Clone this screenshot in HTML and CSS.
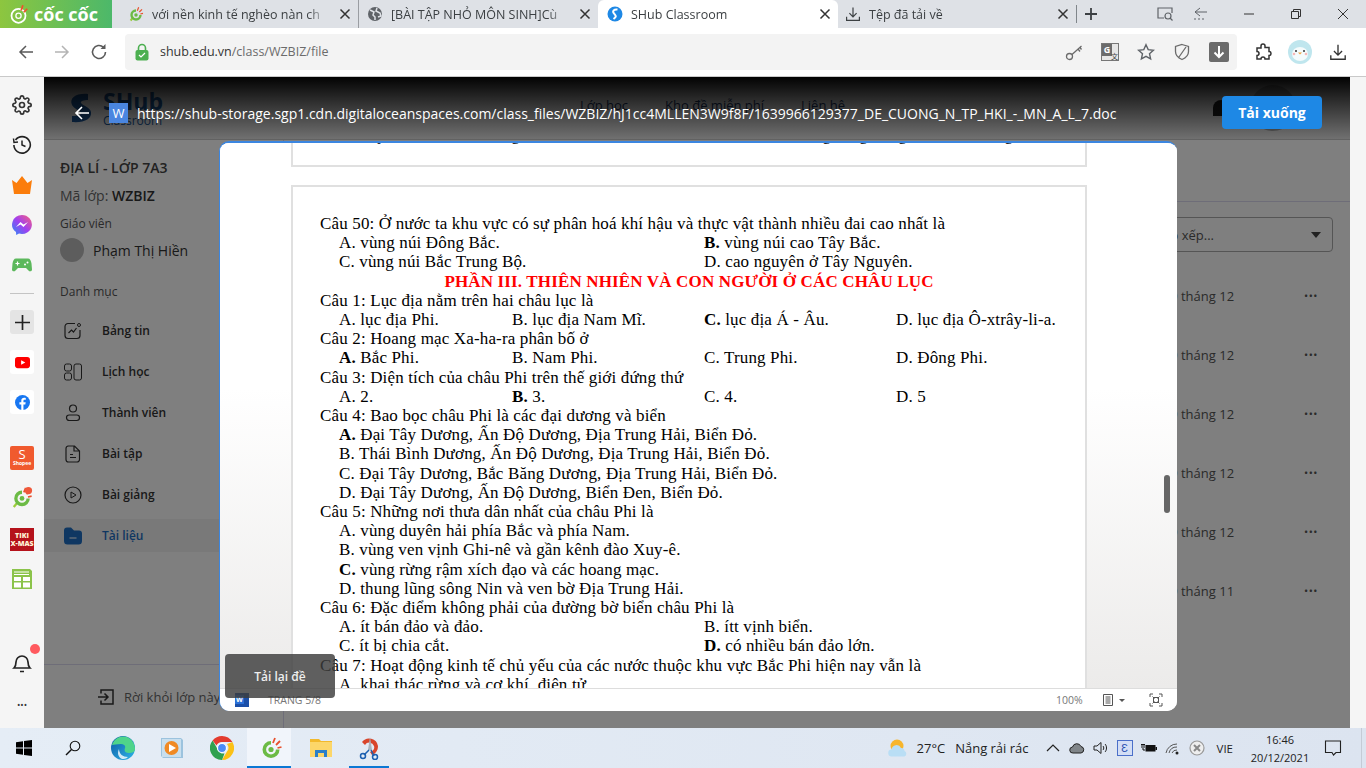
FILE: index.html
```html
<!DOCTYPE html>
<html lang="vi">
<head>
    <meta charset="UTF-8">
    <title>SHub Classroom</title>
    <link rel="stylesheet" href="styles.css">
</head>
<body>
    <svg class="defs" width="0" height="0">
        <symbol id="coccoc" viewBox="0 0 24 24">
            <path d="M12 5a8.5 8.5 0 1 0 8.5 8.5h-3.6A4.9 4.9 0 1 1 12 8.6z" fill="#6cbb45"/>
            <circle cx="12" cy="13.5" r="2.6" fill="#6cbb45"/>
            <path d="M14 7l2-5M17 9l4-4M18.500 12l4-1" stroke="#e8512d" stroke-width="1.800" fill="none"/>
        </symbol>
        <symbol id="gear" viewBox="0 0 24 24">
            <circle cx="12" cy="12" r="3" fill="none" stroke="currentColor" stroke-width="2"/>
            <path fill="none" stroke="currentColor" stroke-width="2" d="M19.400 15a1.650 1.650 0 0 0 .33 1.820l.06.06a2 2 0 0 1 0 2.830 2 2 0 0 1-2.830 0l-.06-.06a1.650 1.650 0 0 0-1.820-.33 1.650 1.650 0 0 0-1 1.510V21a2 2 0 0 1-2 2 2 2 0 0 1-2-2v-.09A1.650 1.650 0 0 0 9 19.400a1.650 1.650 0 0 0-1.820.33l-.06.06a2 2 0 0 1-2.830 0 2 2 0 0 1 0-2.830l.06-.06a1.650 1.650 0 0 0 .33-1.820 1.650 1.650 0 0 0-1.510-1H3a2 2 0 0 1-2-2 2 2 0 0 1 2-2h.09A1.650 1.650 0 0 0 4.600 9a1.650 1.650 0 0 0-.33-1.820l-.06-.06a2 2 0 0 1 0-2.830 2 2 0 0 1 2.830 0l.06.06a1.650 1.650 0 0 0 1.820.33H9a1.650 1.650 0 0 0 1-1.510V3a2 2 0 0 1 2-2 2 2 0 0 1 2 2v.09a1.650 1.650 0 0 0 1 1.510 1.650 1.650 0 0 0 1.820-.33l.06-.06a2 2 0 0 1 2.830 0 2 2 0 0 1 0 2.830l-.06.06a1.650 1.650 0 0 0-.33 1.820V9a1.650 1.650 0 0 0 1.510 1H21a2 2 0 0 1 2 2 2 2 0 0 1-2 2h-.09a1.650 1.650 0 0 0-1.510 1z"/>
        </symbol>
        <symbol id="close" viewBox="0 0 12 12">
            <path d="M1.500 1.500l9 9M10.500 1.500l-9 9" stroke="currentColor" stroke-width="1.500" fill="none"/>
        </symbol>
        <symbol id="download" viewBox="0 0 20 20">
            <path d="M10 2v11M5.500 9l4.500 4.500L14.500 9M2 13.500V18h16v-4.500" stroke="currentColor" stroke-width="1.500" fill="none"/>
        </symbol>
    </svg>

    <div class="tabbar">
        <div class="brand">
            <svg class="brand-mark" viewBox="0 0 24 24"><circle cx="12" cy="14" r="8" fill="none" stroke="#fff" stroke-width="2"/><circle cx="12" cy="14" r="3" fill="none" stroke="#fff" stroke-width="1.500"/><path d="M15 8l2-6M18 10l4-4" stroke="#f0502d" stroke-width="2"/></svg>
            <span class="brand-name">cốc cốc</span>
        </div>
        <div class="tab tab-one">
            <svg class="tab-icon" viewBox="0 0 24 24"><path d="M4 22l4-6" stroke="#9ccc3c" stroke-width="3"/><use href="#coccoc"/></svg>
            <span class="tab-title">với nền kinh tế nghèo nàn ch</span>
            <svg class="tab-close"><use href="#close"/></svg>
        </div>
        <div class="tab tab-two">
            <svg class="tab-icon" viewBox="0 0 16 16"><circle cx="8" cy="8" r="7" fill="#5f6368"/><path d="M3 4l4 2-1 3 2 2v3M10 2l-1 3 4 2 1 3-3 1" stroke="#dee1e6" stroke-width="1.500" fill="none"/></svg>
            <span class="tab-title">[BÀI TẬP NHỎ MÔN SINH]Cù</span>
            <svg class="tab-close"><use href="#close"/></svg>
        </div>
        <div class="tab tab-active">
            <svg class="tab-icon" viewBox="0 0 16 16"><circle cx="8" cy="8" r="7.500" fill="#1e88e5"/><path d="M10.500 3.500C7 3 5 5 7 7.500s3 3-.5 5.500" stroke="#fff" stroke-width="2" fill="none"/></svg>
            <span class="tab-title">SHub Classroom</span>
            <svg class="tab-close"><use href="#close"/></svg>
        </div>
        <div class="tab tab-four">
            <svg class="tab-icon"><use href="#download"/></svg>
            <span class="tab-title">Tệp đã tải về</span>
            <svg class="tab-close"><use href="#close"/></svg>
        </div>
        <div class="tab-new">
            <svg viewBox="0 0 12 12"><path d="M6 0v12M0 6h12" stroke="#3c4043" stroke-width="1.800"/></svg>
        </div>
        <div class="window-tools">
            <svg class="win-capture" viewBox="0 0 18 16"><path d="M8 12H2V2h14v5" stroke="#5f6368" stroke-width="1.200" fill="none"/><circle cx="12" cy="10" r="3" stroke="#5f6368" stroke-width="1.200" fill="none"/><path d="M14 12l2.500 2.500" stroke="#5f6368" stroke-width="1.200"/></svg>
            <svg class="win-back" viewBox="0 0 16 16"><path d="M8 2L3 6l5 4M3 6h12M2 13h2M6 13h2M10 13h2" stroke="#5f6368" stroke-width="1" fill="none"/></svg>
            <svg class="win-btn" viewBox="0 0 12 12"><path d="M1 6h10" stroke="#333" stroke-width="1"/></svg>
            <svg class="win-btn" viewBox="0 0 12 12"><path d="M1.500 3.500h7v7h-7zM3.500 3.500v-2h7v7h-2" stroke="#333" stroke-width="1" fill="none"/></svg>
            <svg class="win-btn win-close" viewBox="0 0 12 12"><path d="M1 1l10 10M11 1L1 11" stroke="#333" stroke-width="1" fill="none"/></svg>
        </div>
    </div>

    <div class="toolbar">
        <svg class="nav-btn" viewBox="0 0 16 16"><path d="M15 8H2M8 2L2 8l6 6" stroke="#5a5a5a" stroke-width="1.500" fill="none"/></svg>
        <svg class="nav-btn" viewBox="0 0 16 16"><path d="M1 8h13M8 2l6 6-6 6" stroke="#b4b4b4" stroke-width="1.500" fill="none"/></svg>
        <svg class="nav-btn" viewBox="0 0 18 18"><path d="M15.500 9A6.500 6.500 0 1 1 13.500 4.300" stroke="#5a5a5a" stroke-width="1.600" fill="none"/><path d="M15.500 1v5h-5z" fill="#5a5a5a"/></svg>
        <div class="omnibox">
            <svg class="lock" viewBox="0 0 14 18"><path d="M3.500 8V5a3.500 3.500 0 0 1 7 0v3" stroke="#4caf50" stroke-width="1.600" fill="none"/><rect x="0.500" y="7" width="13" height="10.500" rx="2" fill="#4caf50"/><path d="M4 12l2 2 4-4" stroke="#fff" stroke-width="1.200" fill="none"/></svg>
            <span class="url"><span class="url-host">shub.edu.vn</span>/class/WZBIZ/file</span>
            <div class="omni-tools">
                <svg class="omni-icon" viewBox="0 0 18 18"><circle cx="4.500" cy="13.500" r="3" stroke="#6b6b6b" stroke-width="1.300" fill="none"/><path d="M7 11.500L16.500 3M13 6l2 2.500M15 4.500l1.500 2" stroke="#6b6b6b" stroke-width="1.300" fill="none"/></svg>
                <div class="translate"><span class="translate-g">G</span><span class="translate-x">文</span></div>
                <svg class="omni-icon" viewBox="0 0 18 18"><path d="M9 1.800l2.200 4.800 5.200.6-3.900 3.500 1.100 5.200L9 13.300l-4.600 2.600 1.100-5.200L1.600 7.200l5.200-.6z" stroke="#5f6368" stroke-width="1.400" fill="none"/></svg>
                <svg class="omni-icon" viewBox="0 0 18 18"><path d="M9 1.500l6.500 2v5c0 4-3 6.500-6.500 8-3.500-1.500-6.500-4-6.500-8v-5zM13 4L6 14" stroke="#6b6b6b" stroke-width="1.300" fill="none"/></svg>
                <div class="omni-download"><svg viewBox="0 0 14 14"><path d="M7 1v11M2.500 7.500L7 12l4.500-4.500" stroke="#fff" stroke-width="2" fill="none"/></svg></div>
            </div>
        </div>
        <div class="browser-tools">
            <svg class="puzzle" viewBox="0 0 18 18"><path d="M7 3a2 2 0 0 1 4 0v1.500h4V8.500a2 2 0 0 1 0 4V16h-4a2 2 0 0 0-4 0H3v-3.500a2 2 0 0 0 0-4V5h4z" stroke="#333" stroke-width="1.500" fill="none"/></svg>
            <svg class="profile" viewBox="0 0 24 24"><circle cx="12" cy="12" r="12" fill="#bfe6ee"/><ellipse cx="12" cy="14" rx="8" ry="7" fill="#f4fbfc"/><circle cx="8" cy="11" r="1" fill="#333"/><circle cx="16" cy="11" r="1" fill="#333"/><path d="M10 12.500h4l-2 2z" fill="#f0a23c"/><circle cx="6" cy="14" r="1.300" fill="#f7b7b7"/><circle cx="18" cy="14" r="1.300" fill="#f7b7b7"/></svg>
            <svg class="browser-download"><use href="#download"/></svg>
        </div>
    </div>

    <div class="main">
        <div class="appbar">
            <svg class="app-icon gear-icon"><use href="#gear"/></svg>
            <svg class="app-icon" viewBox="0 0 20 20"><path d="M3.500 5a8.200 8.200 0 1 1-1.600 5" stroke="#222" stroke-width="1.600" fill="none"/><path d="M1.500 3.500l.5 4 4-.5M10 5.500V10l3.500 1.500" stroke="#222" stroke-width="1.500" fill="none"/></svg>
            <svg class="app-icon" viewBox="0 0 20 20"><path d="M0 5l4.500 3L10 1l5.500 7L20 5l-2 14H2z" fill="#fb7d0b"/></svg>
            <svg class="app-icon" viewBox="0 0 20 20"><defs><linearGradient id="mess" x1="0" y1="1" x2="1" y2="0"><stop offset="0" stop-color="#2a8df5"/><stop offset=".5" stop-color="#a13ff0"/><stop offset="1" stop-color="#f9627b"/></linearGradient></defs><path d="M10 0a10 9.500 0 0 0-6 17l.2 3 2.800-1.400A10 9.500 0 1 0 10 0z" fill="url(#mess)"/><path d="M4 12l4.500-5 3 2.500L16 7l-4.500 5-3-2.500z" fill="#fff"/></svg>
            <svg class="app-icon" viewBox="0 0 20 20"><path d="M4 3.500h12c2 0 3 2 3.500 5l.5 6c0 2-2.500 2.500-3.500 1L14 13H6l-2.500 2.500c-1 1.500-3.500 1-3.500-1l.5-6c.5-3 1.500-5 3.500-5z" fill="#5cb85c"/><path d="M3.500 8.500h4M5.500 6.500v4" stroke="#fff" stroke-width="1.200"/><circle cx="13" cy="9.500" r="1" fill="#fff"/><circle cx="15.500" cy="7.500" r="1" fill="#fff"/></svg>
            <div class="app-divider"></div>
            <div class="app-box app-plus"><svg viewBox="0 0 16 16"><path d="M8 0v16M0 8h16" stroke="#222" stroke-width="1.800"/></svg></div>
            <div class="app-box"><svg viewBox="0 0 16 12" class="box-wide"><rect width="16" height="12" rx="3" fill="#f00"/><path d="M6.500 3.500v5L11 6z" fill="#fff"/></svg></div>
            <div class="app-box"><svg viewBox="0 0 16 16"><circle cx="8" cy="8" r="8" fill="#1877f2"/><path d="M9 16v-6h2l.4-2.300H9V6.300c0-.7.3-1.200 1.300-1.200h1.200V3.100C11 3 10.300 3 9.700 3 8 3 6.700 4 6.700 6v1.700H4.700V10h2v6z" fill="#fff"/></svg></div>
            <div class="app-shopee"><span class="shopee-s">S</span><span class="shopee-name">Shopee</span></div>
            <svg class="app-icon app-coccoc" viewBox="0 0 24 24"><path d="M3 23l5-6" stroke="#9ccc3c" stroke-width="2.500"/><use href="#coccoc"/><circle cx="19" cy="5" r="4" fill="#f0583a"/></svg>
            <div class="app-tiki"><span>TIKI</span><span>X-MAS</span></div>
            <svg class="app-icon" viewBox="0 0 20 20"><path d="M0 0h18l2 2v18H0z" fill="#8bc34a"/><path d="M2 3h15M2 5.500h15" stroke="#fff" stroke-width="1.200"/><rect x="2" y="8" width="7" height="4" fill="#fff"/><rect x="11" y="8" width="7" height="4" fill="#fff"/><rect x="2" y="13.500" width="7" height="5" fill="#fff"/><rect x="11" y="13.500" width="7" height="5" fill="#fff"/></svg>
            <div class="app-bell">
                <svg viewBox="0 0 20 22"><path d="M2 16c1.500-1.500 2-3 2-6a6 6 0 0 1 12 0c0 3 .5 4.500 2 6zM8 19.500h4" stroke="#222" stroke-width="1.700" fill="none"/></svg>
                <span class="bell-dot"></span>
            </div>
            <div class="app-more">•••</div>
        </div>

        <div class="page">
            <div class="page-header">
                <div class="shub-logo">
                    <svg class="shub-mark" viewBox="0 0 26 30"><path d="M20 1C8 0 1 5 4 12c2 4 8 5 9 8 0 2-3 3-9 3v6c12 1 20-3 19-10-1-5-8-6-10-9-1-2 3-3 7-3z" fill="#1d5fa8"/></svg>
                    <div class="shub-text">
                        <span class="shub-word">SHub</span>
                        <span class="shub-sub">Classroom</span>
                    </div>
                </div>
                <nav class="header-nav">
                    <span>Lớp học</span>
                    <span>Kho đề miễn phí</span>
                    <span>Liên hệ</span>
                </nav>
                <div class="header-user"><span class="header-bell"></span><span class="header-avatar"></span></div>
            </div>
            <div class="page-body">
                <aside class="sidebar">
                    <h3 class="class-title">ĐỊA LÍ - LỚP 7A3</h3>
                    <p class="class-code">Mã lớp: <b>WZBIZ</b></p>
                    <p class="side-label">Giáo viên</p>
                    <div class="teacher"><span class="avatar"></span>Phạm Thị Hiền</div>
                    <p class="side-label side-label-cat">Danh mục</p>
                    <ul class="side-menu">
                        <li class="side-item">
                            <svg viewBox="0 0 18 18"><path d="M11 1.500H4A3 3 0 0 0 1 4.500v9a3 3 0 0 0 3 3h9a3 3 0 0 0 3-3V8M4.500 11l3-3 2 2 3-4" stroke="#333" stroke-width="1.200" fill="none"/><circle cx="15" cy="3" r="1.500" stroke="#333" fill="none"/></svg>
                            Bảng tin
                        </li>
                        <li class="side-item">
                            <svg viewBox="0 0 18 18"><rect x="0.500" y="1" width="7" height="7" rx="2" stroke="#333" fill="none"/><rect x="0.500" y="10" width="7" height="7" rx="2" stroke="#333" fill="none"/><rect x="10" y="1" width="7.500" height="16" rx="2" stroke="#333" fill="none"/></svg>
                            Lịch học
                        </li>
                        <li class="side-item">
                            <svg viewBox="0 0 18 18"><circle cx="9" cy="4.500" r="3.500" stroke="#333" stroke-width="1.200" fill="none"/><rect x="2.500" y="11" width="13" height="5.500" rx="2.700" stroke="#333" stroke-width="1.200" fill="none"/></svg>
                            Thành viên
                        </li>
                        <li class="side-item">
                            <svg viewBox="0 0 18 18"><path d="M3.500 1h7l5 5v8.500a2.500 2.500 0 0 1-2.500 2.500H4.500A2.500 2.500 0 0 1 2 14.500v-11A2.500 2.500 0 0 1 4.500 1zM10 1v5h5.500M6 9.500h3M6 12.500h6" stroke="#333" stroke-width="1.200" fill="none"/></svg>
                            Bài tập
                        </li>
                        <li class="side-item">
                            <svg viewBox="0 0 18 18"><circle cx="9" cy="9" r="8" stroke="#333" stroke-width="1.200" fill="none"/><path d="M7 6v6l5-3z" stroke="#333" fill="none"/></svg>
                            Bài giảng
                        </li>
                        <li class="side-item side-item-active">
                            <svg viewBox="0 0 18 18"><path d="M3 .5h4l3 3h5a3 3 0 0 1 3 3V14a3.500 3.500 0 0 1-3.500 3.500h-11A3.500 3.500 0 0 1 0 14V3.500A3 3 0 0 1 3 .5z" fill="#1e6fc4"/><path d="M5.500 11h7" stroke="#dfe9f5" stroke-width="1.200"/></svg>
                            Tài liệu
                        </li>
                    </ul>
                    <div class="side-foot">
                        <svg viewBox="0 0 16 16"><path d="M3 4.500V1h12v14H3v-3.500M0 8h10M6.500 4.500L10 8l-3.500 3.500" stroke="#333" stroke-width="1.500" fill="none"/></svg>
                        Rời khỏi lớp này
                    </div>
                </aside>
                <section class="files">
                    <div class="files-tabs"></div>
                    <div class="sort-box"><span>Sắp xếp...</span><i class="sort-caret"></i></div>
                    <div class="file-row"><span>19 tháng 12</span><i>•••</i></div>
                    <div class="file-row"><span>19 tháng 12</span><i>•••</i></div>
                    <div class="file-row"><span>19 tháng 12</span><i>•••</i></div>
                    <div class="file-row"><span>19 tháng 12</span><i>•••</i></div>
                    <div class="file-row"><span>19 tháng 12</span><i>•••</i></div>
                    <div class="file-row"><span>29 tháng 11</span><i>•••</i></div>
                </section>
            </div>

            <div class="scrim"></div>
            <div class="viewer-top">
                <svg class="viewer-back" viewBox="0 0 16 16"><path d="M15 8H2M8 2L2 8l6 6" stroke="#fff" stroke-width="1.600" fill="none"/></svg>
                <span class="word-badge">W</span>
                <span class="viewer-url">https://shub-storage.sgp1.cdn.digitaloceanspaces.com/class_files/WZBIZ/hJ1cc4MLLEN3W9f8F/1639966129377_DE_CUONG_N_TP_HKI_-_MN_A_L_7.doc</span>
                <button class="viewer-download">Tải xuống</button>
            </div>

            <div class="viewer">
                <div class="doc-scroll">
                    <div class="doc-page doc-page-cut">
                        <p class="line line-opt">B. Tây Bắc có nhiều vùng trọn thiên nhiên thành các đai cao theo cùng rừng vùng núi lớn ở đồng</p>
                    </div>
                    <div class="doc-page">
                        <p class="line">Câu 50: Ở nước ta khu vực có sự phân hoá khí hậu và thực vật thành nhiều đai cao nhất là</p>
                        <div class="opts opts-2"><span>A. vùng núi Đông Bắc.</span><span><b>B.</b> vùng núi cao Tây Bắc.</span></div>
                        <div class="opts opts-2"><span>C. vùng núi Bắc Trung Bộ.</span><span>D. cao nguyên ở Tây Nguyên.</span></div>
                        <p class="line doc-heading">PHẦN III. THIÊN NHIÊN VÀ CON NGƯỜI Ở CÁC CHÂU LỤC</p>
                        <p class="line">Câu 1: Lục địa nằm trên hai châu lục là</p>
                        <div class="opts opts-4"><span>A. lục địa Phi.</span><span>B. lục địa Nam Mĩ.</span><span><b>C.</b> lục địa Á - Âu.</span><span>D. lục địa Ô-xtrây-li-a.</span></div>
                        <p class="line">Câu 2: Hoang mạc Xa-ha-ra phân bố ở</p>
                        <div class="opts opts-4"><span><b>A.</b> Bắc Phi.</span><span>B. Nam Phi.</span><span>C. Trung Phi.</span><span>D. Đông Phi.</span></div>
                        <p class="line">Câu 3: Diện tích của châu Phi trên thế giới đứng thứ</p>
                        <div class="opts opts-4"><span>A. 2.</span><span><b>B.</b> 3.</span><span>C. 4.</span><span>D. 5</span></div>
                        <p class="line">Câu 4: Bao bọc châu Phi là các đại dương và biển</p>
                        <p class="line line-opt"><b>A.</b> Đại Tây Dương, Ấn Độ Dương, Địa Trung Hải, Biển Đỏ.</p>
                        <p class="line line-opt">B. Thái Bình Dương, Ấn Độ Dương, Địa Trung Hải, Biển Đỏ.</p>
                        <p class="line line-opt">C. Đại Tây Dương, Bắc Băng Dương, Địa Trung Hải, Biển Đỏ.</p>
                        <p class="line line-opt">D. Đại Tây Dương, Ấn Độ Dương, Biển Đen, Biển Đỏ.</p>
                        <p class="line">Câu 5: Những nơi thưa dân nhất của châu Phi là</p>
                        <p class="line line-opt">A. vùng duyên hải phía Bắc và phía Nam.</p>
                        <p class="line line-opt">B. vùng ven vịnh Ghi-nê và gần kênh đào Xuy-ê.</p>
                        <p class="line line-opt"><b>C.</b> vùng rừng rậm xích đạo và các hoang mạc.</p>
                        <p class="line line-opt">D. thung lũng sông Nin và ven bờ Địa Trung Hải.</p>
                        <p class="line">Câu 6: Đặc điểm không phải của đường bờ biển châu Phi là</p>
                        <div class="opts opts-2"><span>A. ít bán đảo và đảo.</span><span>B. ítt vịnh biển.</span></div>
                        <div class="opts opts-2"><span>C. ít bị chia cắt.</span><span><b>D.</b> có nhiều bán đảo lớn.</span></div>
                        <p class="line">Câu 7: Hoạt động kinh tế chủ yếu của các nước thuộc khu vực Bắc Phi hiện nay vẫn là</p>
                        <p class="line line-opt">A. khai thác rừng và cơ khí, điện tử.</p>
                    </div>
                    <div class="doc-thumb"></div>
                </div>
                <div class="viewer-status">
                    <span class="status-word"><i>W</i></span>
                    <span class="status-page">TRANG 5/8</span>
                    <span class="status-zoom">100%</span>
                    <svg class="status-view" viewBox="0 0 12 12"><path d="M1.500 .5h9v11h-9zM3.500 3h5M3.500 5h5M3.500 7h5M3.500 9h5" stroke="#555" fill="none"/></svg>
                    <i class="status-caret"></i>
                    <svg class="status-full" viewBox="0 0 14 14"><path d="M1 4V1h3M10 1h3v3M13 10v3h-3M4 13H1v-3M3.500 3.500l2 2M10.500 3.500l-2 2M3.500 10.500l2-2M10.500 10.500l-2-2" stroke="#555" fill="none"/><rect x="4.500" y="4.500" width="5" height="5" stroke="#555" fill="none"/></svg>
                </div>
            </div>
            <div class="reload-toast">Tải lại đề</div>
        </div>

        <div class="rightstrip"></div>
    </div>

    <div class="taskbar">
        <div class="task-slot task-slot-win"><svg class="task-win" viewBox="0 0 16 16"><path d="M0 2.200L7 1.200v6.300H0zM8 1l8-1v7.500H8zM0 8.500h7v6.300l-7-1zM8 8.500h8V16l-8-1.100z" fill="#000"/></svg></div>
        <div class="task-slot task-slot-search"><svg viewBox="0 0 16 16" class="task-search"><circle cx="10" cy="6" r="4.800" stroke="#111" stroke-width="1.100" fill="none"/><path d="M6.500 9.500L1 15" stroke="#111" stroke-width="1.400"/></svg></div>
        <div class="task-slot"><svg viewBox="0 0 24 24"><defs><linearGradient id="edge" x1="0" y1="0" x2="1" y2="1"><stop offset="0" stop-color="#0c59a4"/><stop offset="1" stop-color="#2fb6e8"/></linearGradient></defs><circle cx="12" cy="12" r="12" fill="url(#edge)"/><path d="M1 9C3 2 10-1 16 1c5 2 8 7 8 12 0 3-3 4-6 4-4 0-5-2-4-5 1-2-1-4-4-4-4 0-7 1-9 1z" fill="#4fd48a"/><path d="M11 23c-4-2-5-6-3-10 0 5 4 8 9 8-2 2-4 2-6 2z" fill="#fff" opacity=".8"/></svg></div>
        <div class="task-slot"><svg viewBox="0 0 24 24"><path d="M1 2h20l2 2v18H3l-2-2z" fill="#9cc3de"/><rect x="2" y="3" width="19" height="18" fill="#c9dfee"/><circle cx="11.500" cy="12" r="7" fill="#f08a24"/><path d="M9 8v8l7-4z" fill="#fff"/></svg></div>
        <div class="task-slot"><svg viewBox="0 0 24 24"><path d="M12 0a12 12 0 0 1 10.400 6H12a6 6 0 0 0-5.500 3.500L2.600 4.500A12 12 0 0 1 12 0z" fill="#e33b2e"/><path d="M22.400 6A12 12 0 0 1 12 24l5-8.500A6 6 0 0 0 17 8z" fill="#fbc116"/><path d="M12 24A12 12 0 0 1 2.600 4.500L7.500 13a6 6 0 0 0 7 4.500z" fill="#2fa14e"/><circle cx="12" cy="12" r="4.500" fill="#4c8bf5" stroke="#fff" stroke-width="1.200"/></svg></div>
        <div class="task-slot task-slot-active"><svg viewBox="0 0 24 24"><use href="#coccoc"/></svg></div>
        <div class="task-slot"><svg viewBox="0 0 24 24"><path d="M1 3h9l2 2h11v16H1z" fill="#f2b92c"/><rect x="1" y="6" width="22" height="15" fill="#fcd669"/><path d="M6 21v-7h12v7h-3v-4H9v4z" fill="#2a7fc9"/></svg></div>
        <div class="task-slot task-slot-open"><svg viewBox="0 0 24 24"><path d="M4 6a9 9 0 0 1 16 4c0 5-3 8-6 9l-2-3c3-1 5-3 4-6a5 5 0 0 0-9-1z" fill="#d9452b"/><path d="M12 1l2 13h-4z" fill="#aab4bd"/><path d="M11 14l-5 5M13 14l3 6" stroke="#1b5fb0" stroke-width="1.500"/><circle cx="5" cy="20" r="2.500" fill="none" stroke="#1b5fb0" stroke-width="1.500"/><circle cx="17" cy="21" r="2.500" fill="none" stroke="#1b5fb0" stroke-width="1.500"/></svg></div>

        <div class="tray">
            <svg class="tray-weather" viewBox="0 0 20 20"><circle cx="10" cy="8" r="6.500" fill="#f7b52c"/><path d="M5 18.500a3.500 3.500 0 0 1-.5-7A5 5 0 0 1 14 10a3 3 0 0 1 3.500 3 3 3 0 0 1 0 5.500z" fill="#b9def5"/></svg>
            <span class="tray-temp">27°C</span>
            <span class="tray-desc">Nắng rải rác</span>
            <svg class="tray-icon" viewBox="0 0 16 16"><path d="M2 11l6-6 6 6" stroke="#222" stroke-width="1.200" fill="none"/></svg>
            <svg class="tray-icon" viewBox="0 0 16 16"><path d="M4 13a3 3 0 0 1-.5-6A4.500 4.500 0 0 1 12 6.500a3.300 3.300 0 0 1 0 6.500z" fill="#808589" stroke="#222"/></svg>
            <svg class="tray-icon" viewBox="0 0 16 16"><path d="M1 6h3l4-3.500v11L4 10H1zM10 6c1 1 1 3 0 4M12 4c2 2 2 6 0 8" stroke="#222" fill="none"/></svg>
            <div class="tray-eng">Ɛ</div>
            <svg class="tray-icon" viewBox="0 0 16 16"><path d="M1 4v4M3 4v4M0 4.500h4M2 8v2h2" stroke="#111" fill="none"/><rect x="4.500" y="5" width="10" height="6.500" fill="#111"/><rect x="14.500" y="7" width="1.500" height="3" fill="#111"/></svg>
            <svg class="tray-icon" viewBox="0 0 16 16"><path d="M1 13a11 11 0 0 1 11-9M4 13a8 8 0 0 1 8-6M7 13a5 5 0 0 1 5-3" stroke="#555" stroke-width="1" fill="none"/><circle cx="12" cy="13" r="1.500" fill="#222"/></svg>
            <svg class="tray-icon" viewBox="0 0 16 16"><circle cx="8" cy="8" r="7" stroke="#999" stroke-width="1.200" fill="#eee"/><path d="M5 5l6 6M11 5l-6 6" stroke="#888" stroke-width="2"/></svg>
            <span class="tray-lang">VIE</span>
            <div class="tray-clock"><span>16:46</span><span>20/12/2021</span></div>
            <svg class="tray-notify" viewBox="0 0 18 18"><path d="M1.500 2h15v11.500H12L9.500 16 8 13.500H1.500z" stroke="#222" stroke-width="1.100" fill="none"/></svg>
        </div>
    </div>
</body>
</html>
```

FILE: styles.css
```css
* {
    box-sizing: border-box;
}

html, body {
    margin: 0;
    height: 768px;
    overflow: hidden;
}

body {
    display: flex;
    flex-direction: column;
    font-family: "Open Sans", sans-serif;
    color: #222;
}

p, h3, ul {
    margin: 0;
    padding: 0;
}

.defs {
    position: absolute;
}

/* tab strip */
.tabbar {
    height: 28px;
    display: flex;
    background-color: #dee1e6;
    flex-shrink: 0;
}

.brand {
    width: 112px;
    display: flex;
    align-items: center;
    padding-left: 8px;
    background: linear-gradient(90deg, #8dc63f, #4cb86a);
    color: white;
}

.brand-mark {
    width: 21px;
    height: 24px;
}

.brand-name {
    font-size: 18px;
    font-weight: 700;
    margin-left: 5px;
    line-height: 1;
    white-space: nowrap;
}

.tab {
    display: flex;
    align-items: center;
    font-size: 12.500px;
    color: #3c4043;
    padding-left: 16px;
}

.tab-one {
    width: 247px;
    border-right: 1px solid #9a9da2;
}

.tab-two {
    width: 239px;
    padding-left: 8px;
}

.tab-active {
    width: 240px;
    background-color: white;
    border-radius: 6px 6px 0 0;
    padding-left: 9px;
}

.tab-four {
    width: 238px;
    padding-left: 7px;
}

.tab-icon {
    width: 16px;
    height: 16px;
    flex-shrink: 0;
}

.tab-title {
    flex: 1;
    margin-left: 8px;
    white-space: nowrap;
    overflow: hidden;
    -webkit-mask-image: linear-gradient(90deg, #000 88%, transparent);
}

.tab-close {
    width: 12px;
    height: 12px;
    margin: 0 7px 0 10px;
    flex-shrink: 0;
    color: #333;
}

.tab-new {
    width: 30px;
    display: flex;
    align-items: center;
    padding-left: 8px;
    height: 18px;
    margin-top: 5px;
    border-left: 1px solid #80868b;
}

.tab-new svg {
    width: 12px;
    height: 12px;
}

.window-tools {
    margin-left: auto;
    display: flex;
    align-items: center;
    padding-right: 17px;
}

.win-capture {
    width: 18px;
    height: 16px;
}

.win-back {
    width: 16px;
    height: 16px;
    margin-left: 18px;
}

.win-btn {
    width: 12px;
    height: 12px;
    margin-left: 35px;
}

/* address bar */
.toolbar {
    height: 49px;
    display: flex;
    align-items: center;
    background-color: white;
    border-bottom: 1px solid #c9c9c9;
    padding-left: 18px;
    padding-bottom: 1px;
    flex-shrink: 0;
}

.nav-btn {
    width: 16px;
    height: 16px;
    margin-right: 20px;
}

.nav-btn:nth-child(3) {
    width: 18px;
    height: 18px;
    margin-right: 17px;
}

.omnibox {
    width: 1112px;
    height: 36px;
    background-color: #f3f3f3;
    border-radius: 4px;
    display: flex;
    align-items: center;
    padding-left: 10px;
}

.lock {
    width: 14px;
    height: 18px;
}

.url {
    margin-left: 11px;
    font-size: 12.500px;
    color: #6b6b6b;
}

.url-host {
    color: #333;
}

.omni-tools {
    margin-left: auto;
    display: flex;
    align-items: center;
    gap: 18px;
    padding-right: 8px;
}

.omni-icon {
    width: 18px;
    height: 18px;
}

.translate {
    width: 18px;
    height: 18px;
    position: relative;
    background-color: #e6e6e6;
    border: 1px solid #777;
}

.translate-g {
    position: absolute;
    left: 0;
    top: 0;
    width: 10px;
    height: 12px;
    background-color: #6b6b6b;
    color: white;
    font-size: 9px;
    font-weight: 700;
    line-height: 12px;
    text-align: center;
}

.translate-x {
    position: absolute;
    right: 0;
    bottom: 0;
    font-family: "Noto Sans CJK SC", sans-serif;
    font-size: 7px;
    line-height: 8px;
    color: #444;
}

.omni-download {
    width: 20px;
    height: 20px;
    background-color: #6b6b6b;
    border-radius: 2px;
    display: flex;
    align-items: center;
    justify-content: center;
}

.omni-download svg {
    width: 14px;
    height: 14px;
}

.browser-tools {
    flex: 1;
    display: flex;
    align-items: center;
}

.puzzle {
    width: 18px;
    height: 18px;
    margin-left: 17px;
}

.profile {
    width: 24px;
    height: 24px;
    margin-left: 16px;
}

.browser-download {
    width: 18px;
    height: 18px;
    margin-left: 17px;
    color: #333;
}

/* main area */
.main {
    flex: 1;
    display: flex;
    min-height: 0;
}

.appbar {
    width: 44px;
    background-color: #f5f5f5;
    display: flex;
    flex-direction: column;
    align-items: center;
    padding-top: 18px;
    flex-shrink: 0;
}

.app-icon {
    width: 20px;
    height: 20px;
    margin-bottom: 20px;
    flex-shrink: 0;
}

.gear-icon {
    color: #333;
}

.app-divider {
    width: 24px;
    height: 1px;
    background-color: #c4c4c4;
    margin: -2px 0 16px;
}

.app-box {
    width: 24px;
    height: 24px;
    background-color: white;
    border-radius: 3px;
    display: flex;
    align-items: center;
    justify-content: center;
    margin-bottom: 16px;
}

.app-box svg {
    width: 15px;
    height: 15px;
}

.app-plus {
    background-color: #e4e4e4;
}

.app-shopee {
    width: 24px;
    height: 24px;
    background-color: #f05a2e;
    border-radius: 2px;
    color: white;
    display: flex;
    flex-direction: column;
    align-items: center;
    margin: 16px 0;
    line-height: 1;
}

.shopee-s {
    font-size: 13px;
    margin-top: 2px;
}

.shopee-name {
    font-size: 5px;
    font-weight: 700;
}

.app-coccoc {
    width: 22px;
    height: 22px;
}

.app-tiki {
    width: 24px;
    height: 23px;
    background-color: #b5121b;
    color: #fff3d6;
    font-size: 7px;
    font-weight: 800;
    line-height: 8px;
    display: flex;
    flex-direction: column;
    align-items: center;
    justify-content: center;
    margin-bottom: 18px;
}

.app-bell {
    margin-top: auto;
    position: relative;
    width: 20px;
    height: 22px;
}

.app-bell svg {
    width: 20px;
    height: 22px;
}

.bell-dot {
    position: absolute;
    top: -8px;
    right: -8px;
    width: 10px;
    height: 10px;
    background-color: #ff5a5f;
    border-radius: 50%;
}

.app-more {
    font-size: 9px;
    color: #333;
    margin: 26px 0 18px;
    line-height: 10px;
}

.page {
    flex: 1;
    position: relative;
    background-color: white;
    display: flex;
    flex-direction: column;
    min-width: 0;
}

.page-header {
    height: 63px;
    flex-shrink: 0;
    display: flex;
    align-items: center;
    padding-left: 24px;
    padding-right: 54px;
    border-bottom: 1px solid #ddd;
}

.shub-logo {
    display: flex;
    align-items: center;
    width: 97px;
    flex-shrink: 0;
}

.shub-mark {
    width: 26px;
    height: 30px;
    margin-right: 9px;
    flex-shrink: 0;
}

.shub-text {
    display: flex;
    flex-direction: column;
    line-height: 1;
}

.shub-word {
    font-size: 23px;
    font-weight: 700;
    color: #1d5fa8;
}

.shub-sub {
    font-size: 12px;
    color: #1d5fa8;
    margin-top: 2px;
}

.header-nav {
    display: flex;
    gap: 37px;
    margin-left: 415px;
    font-size: 13px;
    color: #1d3a6b;
    padding-bottom: 6px;
}

.header-user {
    margin-left: auto;
    display: flex;
    align-items: center;
}

.header-bell {
    width: 16px;
    height: 16px;
    background-color: #222;
    border-radius: 50% 50% 0 0;
    margin-right: 21px;
}

.header-avatar {
    width: 46px;
    height: 46px;
    background-color: #bbb;
    border-radius: 50%;
}

.page-body {
    flex: 1;
    display: flex;
    min-height: 0;
}

.sidebar {
    width: 240px;
    flex-shrink: 0;
    border-right: 1px solid #dddbf0;
    display: flex;
    flex-direction: column;
    color: #444;
}

.class-title {
    font-size: 14px;
    font-weight: 600;
    margin: 18px 0 0 16px;
    line-height: 20px;
}

.class-code {
    font-size: 14px;
    margin: 8px 0 0 16px;
    line-height: 20px;
    color: #666;
}

.class-code b {
    font-weight: 600;
    color: #333;
}

.side-label {
    font-size: 12px;
    margin: 10px 0 0 16px;
    line-height: 16px;
    color: #555;
}

.side-label-cat {
    margin-top: 22px;
}

.teacher {
    display: flex;
    align-items: center;
    margin: 6px 0 0 16px;
    font-size: 14px;
    color: #333;
}

.avatar {
    width: 24px;
    height: 24px;
    background-color: #bbb;
    border-radius: 50%;
    margin-right: 9px;
}

.side-menu {
    list-style: none;
    margin-top: 10px;
    width: 176px;
}

.side-item {
    height: 41px;
    display: flex;
    align-items: center;
    padding-left: 20px;
    font-size: 12px;
    font-weight: 600;
    color: #333;
}

.side-item svg {
    width: 18px;
    height: 18px;
    margin-right: 20px;
}

.side-item-active {
    color: #1e6fc4;
    background-color: #f2f2f2;
    height: 33px;
    margin-top: 4px;
}

.side-foot {
    margin-top: auto;
    height: 64px;
    border-top: 1px solid #dddbf0;
    display: flex;
    align-items: center;
    padding-left: 54px;
    font-size: 13px;
    color: #666;
    white-space: nowrap;
}

.side-foot svg {
    width: 16px;
    height: 16px;
    margin-right: 10px;
}

.files {
    flex: 1;
    display: flex;
    flex-direction: column;
    padding-right: 17px;
}

.files-tabs {
    height: 62px;
    border-bottom: 1px solid #dddbf0;
    margin-right: -17px;
    flex-shrink: 0;
}

.sort-box {
    margin: 15px 0 0 760px;
    height: 35px;
    border: 1px solid #aaa;
    border-radius: 4px;
    display: flex;
    align-items: center;
    justify-content: space-between;
    padding-right: 11px;
    font-size: 13px;
    color: #555;
    flex-shrink: 0;
}

.sort-box span {
    margin-left: 111px;
    white-space: nowrap;
}

.sort-caret {
    width: 0;
    height: 0;
    border-left: 5px solid transparent;
    border-right: 5px solid transparent;
    border-top: 6px solid #444;
}

.file-row {
    height: 59px;
    display: flex;
    justify-content: flex-end;
    align-items: center;
    font-size: 13px;
    color: #555;
    flex-shrink: 0;
}

.file-row:nth-child(3) {
    margin-top: 14px;
}

.file-row i {
    font-style: normal;
    font-size: 11px;
    letter-spacing: 0.5px;
    margin: 0 15px 0 70px;
}

.scrim {
    position: absolute;
    inset: 0;
    background-color: rgba(0, 0, 0, 0.5);
}

/* document viewer */
.viewer-top {
    position: absolute;
    top: 0;
    left: 0;
    right: 0;
    height: 63px;
    display: flex;
    align-items: center;
    padding: 9px 0 0 30px;
    color: white;
    background: linear-gradient(rgba(0, 0, 0, 0.98), rgba(0, 0, 0, 0.1));
}

.viewer-back {
    width: 16px;
    height: 16px;
}

.word-badge {
    width: 19px;
    height: 20px;
    margin-left: 19px;
    background-color: #4a86e0;
    font-size: 13px;
    line-height: 20px;
    text-align: center;
}

.viewer-url {
    margin-left: 9px;
    font-size: 14px;
    white-space: nowrap;
}

.viewer-download {
    position: absolute;
    left: 1178px;
    top: 19px;
    width: 100px;
    height: 33px;
    background-color: #1e88e5;
    color: white;
    border: none;
    border-radius: 4px;
    font-family: "Open Sans", sans-serif;
    font-size: 14px;
    font-weight: 700;
}

.viewer {
    position: absolute;
    left: 175px;
    top: 64px;
    width: 958px;
    height: 570px;
    background-color: white;
    border-left: 1px solid #3b86e0;
    border-top: 2px solid #3b86e0;
    border-radius: 10px;
    overflow: hidden;
    display: flex;
    flex-direction: column;
}

.doc-scroll {
    flex: 1;
    position: relative;
    overflow: hidden;
    padding-left: 71px;
    background: linear-gradient(#fff 45%, #ecebea);
    min-height: 0;
}

.doc-page {
    width: 796px;
    border: 2px solid #e0e0e0;
    background-color: white;
    padding: 27px 27px 0;
    font-family: "Liberation Serif", serif;
    font-size: 17px;
    letter-spacing: 0.15px;
    color: black;
    height: 520px;
}

.doc-page-cut {
    height: 24px;
    border-top: none;
    margin-bottom: 18px;
    padding-top: 0;
    padding-bottom: 21px;
    display: flex;
    align-items: flex-end;
    overflow: hidden;
}

.line {
    line-height: 19.200px;
    white-space: nowrap;
}

.line-opt {
    padding-left: 19px;
}

.doc-heading {
    text-align: center;
    color: #ff0000;
    font-weight: 700;
}

.opts {
    display: grid;
    padding-left: 19px;
    line-height: 19.200px;
    white-space: nowrap;
}

.opts-2 {
    grid-template-columns: 365px 1fr;
}

.opts-4 {
    grid-template-columns: 173px 192px 192px 1fr;
}

.doc-thumb {
    position: absolute;
    left: 944px;
    top: 332px;
    width: 6px;
    height: 38px;
    background-color: #666;
    border-radius: 3px;
}

.viewer-status {
    height: 23px;
    flex-shrink: 0;
    background-color: white;
    border-top: 1px solid #ddd;
    display: flex;
    align-items: center;
    padding-left: 15px;
    font-size: 10.500px;
    color: #777;
    white-space: nowrap;
}

.status-word {
    width: 14px;
    height: 14px;
    background-color: #1c4fa8;
    flex-shrink: 0;
}

.status-word i {
    display: block;
    width: 9px;
    height: 9px;
    margin-top: 2px;
    background-color: #2a6fd6;
    font-size: 7px;
    line-height: 9px;
    font-style: normal;
    font-weight: 700;
    color: white;
    text-align: center;
}

.status-page {
    margin-left: 19px;
}

.status-zoom {
    margin-left: 735px;
}

.status-view {
    width: 12px;
    height: 12px;
    margin-left: 19px;
}

.status-caret {
    width: 0;
    height: 0;
    border-left: 3px solid transparent;
    border-right: 3px solid transparent;
    border-top: 3px solid #555;
    margin-left: 5px;
}

.status-full {
    width: 14px;
    height: 14px;
    margin-left: 24px;
}

.reload-toast {
    position: absolute;
    left: 181px;
    top: 577px;
    width: 110px;
    height: 44px;
    background-color: rgba(60, 60, 60, 0.82);
    border-radius: 4px;
    color: #eee;
    font-size: 12px;
    font-weight: 600;
    display: flex;
    align-items: center;
    justify-content: center;
}

.rightstrip {
    width: 16px;
    background-color: #f5f5f5;
    flex-shrink: 0;
}

/* windows taskbar */
.taskbar {
    height: 40px;
    display: flex;
    flex-shrink: 0;
    background: linear-gradient(90deg, #e5edf6, #dce4f0);
}

.task-slot {
    width: 49.500px;
    display: flex;
    align-items: center;
    justify-content: center;
    padding-bottom: 1px;
}

.task-slot svg {
    width: 24px;
    height: 24px;
}

.task-slot-win {
    width: 48px;
}

.task-slot-win .task-win {
    width: 16px;
    height: 16px;
}

.task-slot-search {
    width: 50px;
}

.task-slot-search .task-search {
    width: 16px;
    height: 16px;
}

.task-slot-active {
    background:
        linear-gradient(#0c78d4, #0c78d4) 0 100% / 44px 2px no-repeat,
        linear-gradient(#f1f5fb, #f1f5fb) 0 0 / 44px 100% no-repeat;
}

.task-slot-open {
    background: linear-gradient(#0c78d4, #0c78d4) 3px 100% / 40px 2px no-repeat;
}

.tray {
    margin-left: auto;
    display: flex;
    align-items: center;
    font-size: 13px;
    color: #222;
    padding-right: 19px;
    border-right: 1px solid #c4cbd6;
    margin-right: 4px;
}

.tray-weather {
    width: 20px;
    height: 20px;
}

.tray-temp {
    margin-left: 10px;
}

.tray-desc {
    margin: 0 12px 0 10px;
}

.tray-icon {
    width: 16px;
    height: 16px;
    margin: 0 4px;
}

.tray-eng {
    width: 16px;
    height: 16px;
    margin: 0 4px;
    background-color: #d3def5;
    border: 1px solid #4a6fc9;
    color: #2a4fb0;
    font-size: 11px;
    line-height: 14px;
    text-align: center;
}

.tray-lang {
    margin-left: 8px;
    font-size: 11.500px;
}

.tray-clock {
    width: 62px;
    margin-left: 16px;
    display: flex;
    flex-direction: column;
    align-items: center;
    font-size: 11px;
    line-height: 18px;
    padding-top: 1px;
}

.tray-notify {
    width: 18px;
    height: 18px;
    margin-left: 13px;
}
```
